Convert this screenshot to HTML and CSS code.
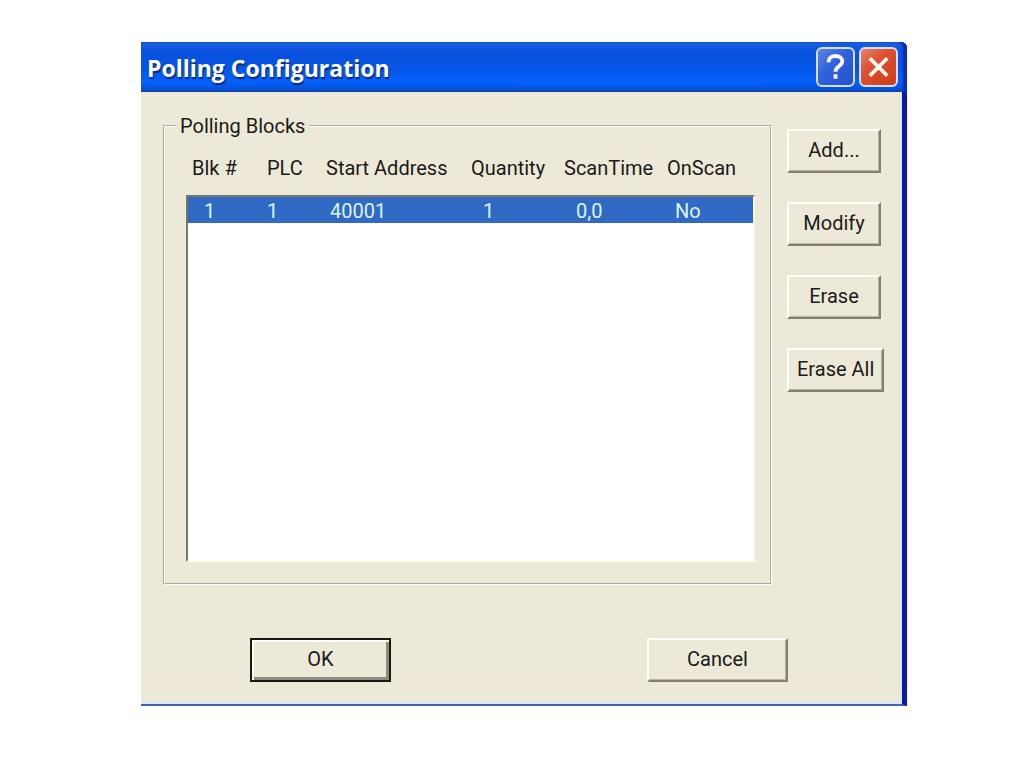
FILE: index.html
```html
<!DOCTYPE html>
<html lang="en">

<head>
	<meta charset="utf-8">
	<title>Polling Configuration</title>
	<link rel="stylesheet" href="styles.css">
</head>

<body>
	<div class="window">
		<header class="titlebar">
			<h1>Polling Configuration</h1>
			<button type="button" class="caption help" aria-label="Help">
				<svg viewBox="0 0 36 36" width="35" height="36"><path d="M11 13V12C11 5 25 5 25 12C25 17 18 17 18 23M18 25.500V30" /></svg>
			</button>
			<button type="button" class="caption close" aria-label="Close">
				<svg viewBox="0 0 36 36" width="35" height="36"><path d="M9 9L27 27M27 9L9 27" /></svg>
			</button>
		</header>
		<form class="client" action="">
			<div class="main">
				<fieldset>
					<legend>Polling Blocks</legend>
					<table>
						<thead>
							<tr>
								<th>Blk #</th>
								<th>PLC</th>
								<th>Start Address</th>
								<th>Quantity</th>
								<th>ScanTime</th>
								<th>OnScan</th>
							</tr>
						</thead>
						<tbody>
							<tr class="selected">
								<td>1</td>
								<td>1</td>
								<td>40001</td>
								<td>1</td>
								<td>0,0</td>
								<td>No</td>
							</tr>
						</tbody>
					</table>
				</fieldset>
				<div class="side">
					<button type="button" class="btn">Add...</button>
					<button type="button" class="btn">Modify</button>
					<button type="button" class="btn">Erase</button>
					<button type="button" class="btn">Erase All</button>
				</div>
			</div>
			<div class="footer">
				<button type="button" class="btn wide default">OK</button>
				<button type="button" class="btn wide">Cancel</button>
			</div>
		</form>
	</div>
</body>

</html>
```
FILE: styles.css
```css
* {
	box-sizing: border-box;
}

body {
	margin: 42px 117px 42px 141px;
	background: white;
	color: #1c1a18;
	font-family: Roboto, "Liberation Sans", sans-serif;
	font-size: 20px;
	line-height: 24px;
}

.window {
	min-width: 740px;
	background: #ece9d8;
	border-right: 5px solid #0a1aa8;
	border-bottom: 2px solid #4361a8;
	border-top-right-radius: 6px;
}

/* title bar */
.titlebar {
	display: flex;
	align-items: center;
	gap: 4px;
	height: 50px;
	margin-right: -5px;
	padding: 0 9px 0 6px;
	background: linear-gradient(#1a62e0, #0a50dc 20%, #0454e6 50%, #0560fa 80%, #0352dc 94%, #1846a8);
	border-top-right-radius: 6px;
	box-shadow: inset -4px 0 2px #0a2cb4;
}

.titlebar h1 {
	flex: 1;
	margin: 0;
	color: white;
	font-family: "Open Sans", sans-serif;
	font-size: 23px;
	font-weight: bold;
	line-height: 32px;
	padding-top: 2px;
	text-shadow: 1px 2px 1px #0a2a80;
}

.caption {
	width: 39px;
	height: 40px;
	padding: 0;
	border: 2px solid #d4e0fa;
	border-radius: 6px;
}

.caption svg {
	display: block;
	fill: none;
	stroke: #fbf6f2;
	stroke-width: 4;
}

.help {
	background: linear-gradient(135deg, #5c84e6, #3264dc 40%, #2450d0);
}

.close {
	background: linear-gradient(135deg, #e68468, #dc5030 40%, #cc3c18);
}

/* dialog area */
.client {
	padding: 22px 17px 20px 22px;
	border-right: 1px solid #d4e4f4;
	border-bottom: 2px solid #d8e6f2;
}

.main {
	display: flex;
	gap: 15px;
}

fieldset {
	flex: 1;
	min-width: 0;
	margin: 0;
	padding: 0 10px 21px 11px;
	border: 2px groove #fffef4;
}

legend {
	padding: 0 4px;
}

table {
	display: block;
	margin: 18px 5px 0 10px;
}

thead {
	display: block;
	padding: 0 2px 15px;
}

tbody {
	display: block;
	height: 367px;
	background: white;
	border: 2px solid #fbf9ee;
	border-top-color: #77756b;
	border-left-color: #77756b;
}

tr {
	display: grid;
	grid-template-columns: 75fr 59fr 145fr 93fr 103fr 90fr;
}

th,
td {
	padding: 0 0 0 4px;
	font-weight: normal;
	text-align: left;
	white-space: nowrap;
}

.selected {
	height: 26px;
	background: #316ac5;
	color: #dcf4ff;
	line-height: 28px;
}

td:nth-child(1),
td:nth-child(4),
td:nth-child(5) {
	padding-left: 16px;
}

td:nth-child(3) {
	padding-left: 8px;
}

td:nth-child(6) {
	padding-left: 12px;
}

/* buttons */
.side {
	display: flex;
	flex-direction: column;
	align-items: flex-start;
	gap: 29px;
	width: 97px;
	padding-top: 15px;
}

.btn {
	min-width: 94px;
	height: 44px;
	padding: 0 8px 2px;
	background: #ece9d8;
	border: 2px solid;
	border-color: #fffef6 #828074 #828074 #fffef6;
	box-shadow: inset -1px -1px #b8b5a4;
	color: inherit;
	font: inherit;
	white-space: nowrap;
}

.wide {
	width: 141px;
}

.default {
	border-color: #1a1814;
	box-shadow: inset 2px 2px #fffef6, inset -3px -3px #8f8c7e;
}

.footer {
	display: flex;
	justify-content: space-between;
	margin-top: 53px;
	padding: 0 96px 0 87px;
}
```
